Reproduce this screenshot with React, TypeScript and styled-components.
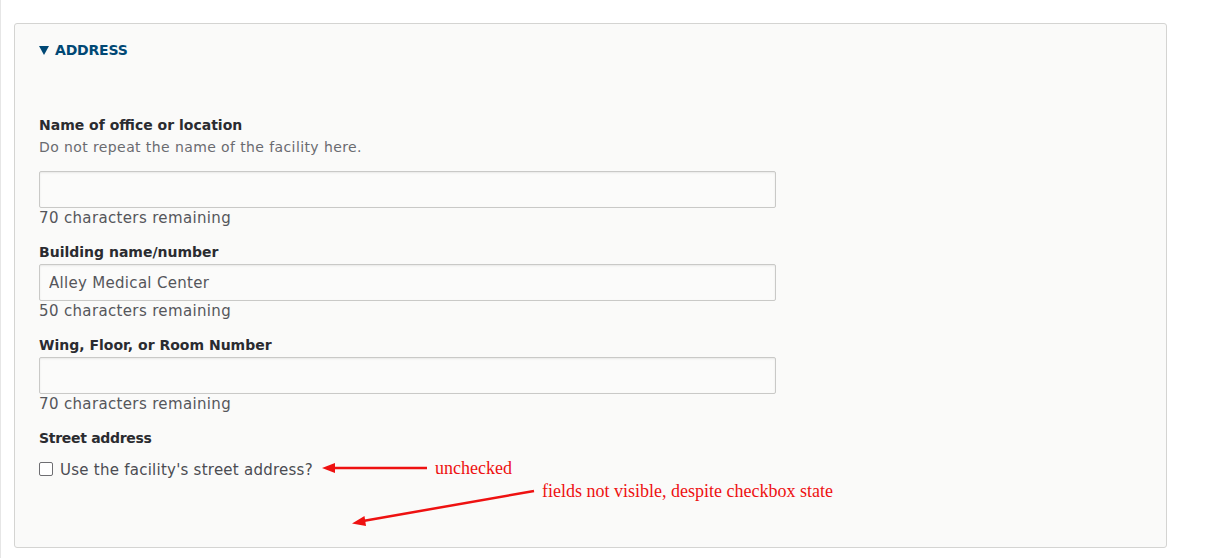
import React from "react";
import styled, { createGlobalStyle } from "styled-components";

const Global = createGlobalStyle`
  html, body { margin: 0; padding: 0; background: #ffffff; }
  body { font-family: "DejaVu Sans", "Liberation Sans", sans-serif; }
`;

const Page = styled.div`
  position: relative;
  width: 1205px;
  height: 558px;
  box-sizing: border-box;
  padding: 23px 0 0 13px;
  border-left: 1px solid #e6e6e6;
`;

const Panel = styled.details`
  width: 1153px;
  height: 525px;
  box-sizing: border-box;
  background: #fafaf9;
  border: 1px solid #d4d4d2;
  border-radius: 3px;
  padding: 15px 24px 0 24px;
`;

const Summary = styled.summary`
  list-style: none;
  display: flex;
  align-items: center;
  gap: 6px;
  height: 22px;
  color: #004875;
  font-size: 14px;
  font-weight: bold;
  letter-spacing: -0.2px;
  text-transform: uppercase;
  cursor: pointer;
  &::-webkit-details-marker { display: none; }
`;

const Caret = styled.span`
  width: 0;
  height: 0;
  border-left: 5px solid transparent;
  border-right: 5px solid transparent;
  border-top: 9px solid #004875;
  margin-top: 1px;
`;

const Body = styled.div`
  padding-top: 54px;
`;

const Field = styled.div<{ $gap?: number }>`
  margin-top: ${(p) => p.$gap ?? 0}px;
  display: flex;
  flex-direction: column;
`;

const Label = styled.label<{ $tight?: boolean }>`
  font-size: 14px;
  font-weight: bold;
  color: #2a2b30;
  line-height: 20px;
  letter-spacing: ${(p) => (p.$tight ? "-0.3px" : "0")};
`;

const Description = styled.div`
  font-size: 14px;
  color: #6a6b70;
  line-height: 20px;
  letter-spacing: 0.4px;
  margin-top: 2px;
  margin-bottom: 14px;
`;

const Input = styled.input<{ $mt?: number }>`
  box-sizing: border-box;
  width: 737px;
  height: 37px;
  margin: ${(p) => p.$mt ?? 0}px 0 0 0;
  padding: 0 9px;
  border: 1px solid #c9c9c7;
  border-radius: 2px;
  background: #fbfbfa;
  box-shadow: inset 0 1px 2px rgba(0, 0, 0, 0.08);
  font-family: "DejaVu Sans", sans-serif;
  font-size: 15px;
  letter-spacing: 0.3px;
  color: #55565b;
  outline: none;
`;

const Counter = styled.div`
  font-size: 15px;
  color: #55565b;
  line-height: 20px;
  letter-spacing: 0.35px;
`;

const CheckRow = styled.label`
  display: flex;
  align-items: center;
  gap: 7px;
  margin-top: 12px;
  font-size: 15px;
  color: #4b4c52;
  line-height: 20px;
  letter-spacing: 0.25px;
`;

const Box = styled.span`
  width: 12px;
  height: 12px;
  border: 1px solid #6e6e72;
  border-radius: 2px;
  background: #ffffff;
  display: inline-block;
  margin-top: -2px;
`;

const Overlay = styled.svg`
  position: absolute;
  left: 0;
  top: 0;
  width: 1205px;
  height: 558px;
  pointer-events: none;
`;

const Note = styled.span<{ $x: number; $y: number }>`
  position: absolute;
  left: ${(p) => p.$x}px;
  top: ${(p) => p.$y}px;
  font-family: "Liberation Serif", serif;
  font-size: 18px;
  color: #ee1111;
  line-height: 20px;
  white-space: nowrap;
`;

export default function App() {
  return (
    <>
      <Global />
      <Page>
        <Panel open>
          <Summary>
            <Caret />
            Address
          </Summary>
          <Body>
            <Field>
              <Label>Name of office or location</Label>
              <Description>Do not repeat the name of the facility here.</Description>
              <Input />
              <Counter>70 characters remaining</Counter>
            </Field>
            <Field $gap={14}>
              <Label>Building name/number</Label>
              <Input $mt={2} defaultValue="Alley Medical Center" />
              <Counter>50 characters remaining</Counter>
            </Field>
            <Field $gap={14}>
              <Label>Wing, Floor, or Room Number</Label>
              <Input $mt={2} />
              <Counter>70 characters remaining</Counter>
            </Field>
            <Field $gap={14}>
              <Label $tight>Street address</Label>
              <CheckRow>
                <Box />
                Use the facility's street address?
              </CheckRow>
            </Field>
          </Body>
        </Panel>
        <Overlay viewBox="0 0 1205 558">
          <line x1="426" y1="468" x2="330" y2="468" stroke="#ee1111" strokeWidth="2.5" />
          <polygon points="321,468 334,463 334,473" fill="#ee1111" />
          <line x1="533" y1="491" x2="362" y2="521" stroke="#ee1111" strokeWidth="2.5" />
          <polygon points="351,523.5 363.5,516 365,526" fill="#ee1111" />
        </Overlay>
        <Note $x={434} $y={458}>unchecked</Note>
        <Note $x={541} $y={481}>fields not visible, despite checkbox state</Note>
      </Page>
    </>
  );
}
